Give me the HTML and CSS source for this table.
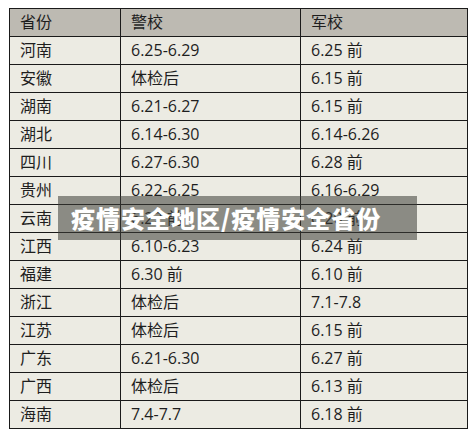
FILE: index.html
```html
<!DOCTYPE html>
<html lang="zh">
<head>
<meta charset="utf-8">
<link rel="stylesheet" href="styles.css">
</head>
<body>
<div class="wrap">
  <table class="grid">
    <colgroup><col class="c1"><col class="c2"><col class="c3"></colgroup>
    <thead>
      <tr><th>省份</th><th>警校</th><th>军校</th></tr>
    </thead>
    <tbody>
      <tr><td>河南</td><td>6.25-6.29</td><td>6.25 前</td></tr>
      <tr><td>安徽</td><td>体检后</td><td>6.15 前</td></tr>
      <tr><td>湖南</td><td>6.21-6.27</td><td>6.15 前</td></tr>
      <tr><td>湖北</td><td>6.14-6.30</td><td>6.14-6.26</td></tr>
      <tr><td>四川</td><td>6.27-6.30</td><td>6.28 前</td></tr>
      <tr><td>贵州</td><td>6.22-6.25</td><td>6.16-6.29</td></tr>
      <tr><td>云南</td><td>6.22 前</td><td>6.20 前</td></tr>
      <tr><td>江西</td><td>6.10-6.23</td><td>6.24 前</td></tr>
      <tr><td>福建</td><td>6.30 前</td><td>6.10 前</td></tr>
      <tr><td>浙江</td><td>体检后</td><td>7.1-7.8</td></tr>
      <tr><td>江苏</td><td>体检后</td><td>6.15 前</td></tr>
      <tr><td>广东</td><td>6.21-6.30</td><td>6.27 前</td></tr>
      <tr><td>广西</td><td>体检后</td><td>6.13 前</td></tr>
      <tr><td>海南</td><td>7.4-7.7</td><td>6.18 前</td></tr>
    </tbody>
  </table>
  <div class="banner">疫情安全地区/疫情安全省份</div>
</div>
</body>
</html>
```
FILE: styles.css
```css
html, body {
  margin: 0;
  padding: 0;
  background: #ffffff;
}
.wrap {
  position: relative;
  padding: 8px 0 0 9px;
}
.grid {
  border-collapse: collapse;
  table-layout: fixed;
  width: 458px;
  font-family: "Open Sans", "Noto Sans CJK SC", sans-serif;
  font-size: 16px;
  color: #1e1e1e;
}
.c1 { width: 111px; }
.c2 { width: 180px; }
.c3 { width: 167px; }
.grid th, .grid td {
  height: 27px;
  padding: 0 0 0 10px;
  border: 1px solid #1a1a1a;
  text-align: left;
  font-weight: normal;
  white-space: nowrap;
  line-height: 27px;
}
.grid th {
  background: #bdbab2;
}
.grid td {
  background: #ecebe3;
}
.banner {
  position: absolute;
  left: 58px;
  top: 196px;
  width: 359px;
  height: 44px;
  box-sizing: border-box;
  padding-left: 13px;
  background: rgba(60, 60, 55, 0.55);
  color: #ffffff;
  font-family: "Noto Sans CJK SC", sans-serif;
  font-weight: 900;
  font-size: 24px;
  line-height: 44px;
  letter-spacing: 1px;
  white-space: nowrap;
}
```
